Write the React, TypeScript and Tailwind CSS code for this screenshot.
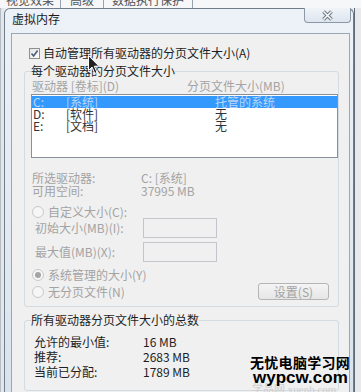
import React from 'react'

const dis = 'text-[#a3a3a3]'

function Radio({ checked }: { checked?: boolean }) {
  return (
    <span className="w-[12px] h-[12px] rounded-full border border-[#c9c9c9] bg-[#f6f6f6] flex items-center justify-center shrink-0">
      {checked && <span className="w-[6px] h-[6px] rounded-full bg-[#a5a5a5]" />}
    </span>
  )
}

function Checkbox() {
  return (
    <span className="w-[11px] h-[11px] border border-[#8f8f8f] bg-linear-to-br from-[#e4e4e4] to-[#ffffff] flex items-center justify-center shrink-0">
      <svg width="9" height="9" viewBox="0 0 9 9">
        <path d="M1.5 4.5 L3.6 7 L7.6 1.5" fill="none" stroke="#4b5d78" strokeWidth="1.6" />
      </svg>
    </span>
  )
}

const drives = [
  { letter: 'C:', label: '[系统]', size: '托管的系统', selected: true },
  { letter: 'D:', label: '[软件]', size: '无' },
  { letter: 'E:', label: '[文档]', size: '无' },
]

export default function App() {
  return (
    <div className="w-[361px] h-[392px] overflow-hidden relative bg-[#eceef1] text-[12px] leading-[14px] text-[#1e1e1e] font-['Noto_Sans_CJK_SC','Liberation_Sans',sans-serif]">
      {/* tabs of the parent dialog, mostly hidden */}
      <div className="h-[8px] overflow-hidden bg-[#f6f7f9]">
        <div className="flex -mt-[9px] h-[17px] leading-[17px] text-[#555]">
          <span className="px-[6px] border-r border-[#9aa4ae]">视觉效果</span>
          <span className="px-[9px] border-r border-[#9aa4ae]">高级</span>
          <span className="px-[8px] border-r border-[#9aa4ae]">数据执行保护</span>
        </div>
      </div>

      <div className="flex h-[384px]">
        <div className="w-[4px] bg-[#e4e6e9] border-l border-[#b5bcc4]" />

        {/* dialog window */}
        <div className="w-[350px] h-[400px] border border-b-0 border-[#6f7d8d] rounded-t-[6px] bg-linear-to-b from-[#edf2f8] to-[#d9e2eb] flex flex-col">
          <div className="h-[24px] flex items-start justify-between">
            <span className="pl-[7px] pt-[3px] text-[12px] leading-[14px] text-[#1a1a1a]">虚拟内存</span>
            <div className="w-[47px] h-[15px] mr-[2px] -mt-[1px] border border-t-0 border-[#8c98a6] rounded-b-[4px] bg-linear-to-b from-[#f0f4f8] to-[#dde5ee] flex items-center justify-center">
              <svg width="13" height="11" viewBox="0 0 13 11">
                <path d="M2.5 1.5 L10.5 9.5 M10.5 1.5 L2.5 9.5" stroke="#6c7784" strokeWidth="3.6" />
                <path d="M2.5 1.5 L10.5 9.5 M10.5 1.5 L2.5 9.5" stroke="#f8f9fb" strokeWidth="1.6" />
              </svg>
            </div>
          </div>

          {/* client area */}
          <div className="ml-[6px] w-[339px] flex-1 border border-[#9ba7b4] bg-[#f0f0f0]">
            <div className="mt-[12px] h-[14px] pl-[17px] flex items-center gap-[3px]">
              <Checkbox />
              <span>自动管理所有驱动器的分页文件大小(A)</span>
            </div>

            <fieldset className="mt-[4px] ml-[12px] w-[315px] border border-[#d3dbe2] rounded-[3px] pb-[6px]">
              <legend className="ml-[6px] h-[14px] leading-[14px]">每个驱动器的分页文件大小</legend>

              <div className={`mt-[2px] h-[12px] leading-[12px] flex pl-[7px] ${dis}`}>
                <span className="w-[155px]">驱动器 [卷标](D)</span>
                <span>分页文件大小(MB)</span>
              </div>

              <div className="mt-[2px] ml-[6px] w-[307px] h-[64px] border border-[#8a9099] bg-white pt-[1px]">
                {drives.map((d) => (
                  <div
                    key={d.letter}
                    className={`h-[12px] leading-[12px] flex ${d.selected ? 'bg-[#3399ff] text-[#b9d6f5]' : 'text-[#333]'}`}
                  >
                    <span className="w-[34px] pl-[1px]">{d.letter}</span>
                    <span className="w-[149px]">{d.label}</span>
                    <span>{d.size}</span>
                  </div>
                ))}
              </div>

              <div className={`mt-[14px] h-[12px] leading-[12px] flex pl-[7px] ${dis}`}>
                <span className="w-[109px]">所选驱动器:</span>
                <span>C: [系统]</span>
              </div>
              <div className={`mt-[1px] h-[12px] leading-[12px] flex pl-[7px] ${dis}`}>
                <span className="w-[109px]">可用空间:</span>
                <span>37995 MB</span>
              </div>

              <div className={`mt-[9px] h-[12px] leading-[12px] flex items-center gap-[4px] pl-[7px] ${dis}`}>
                <Radio />
                <span>自定义大小(C):</span>
              </div>
              <div className={`h-[20px] flex items-center pl-[10px] ${dis}`}>
                <span className="w-[108px]">初始大小(MB)(I):</span>
                <span className="w-[74px] h-[20px] border border-[#c2c6cb] bg-[#f0f0f0]" />
              </div>
              <div className={`mt-[4px] h-[20px] flex items-center pl-[10px] ${dis}`}>
                <span className="w-[108px]">最大值(MB)(X):</span>
                <span className="w-[74px] h-[20px] border border-[#c2c6cb] bg-[#f0f0f0]" />
              </div>

              <div className={`mt-[7px] h-[12px] leading-[12px] flex items-center gap-[4px] pl-[7px] ${dis}`}>
                <Radio checked />
                <span>系统管理的大小(Y)</span>
              </div>
              <div className={`mt-[2px] h-[17px] flex items-center gap-[4px] pl-[7px] ${dis}`}>
                <Radio />
                <span>无分页文件(N)</span>
                <span className="ml-auto mr-[9px] w-[71px] h-[17px] leading-[15px] text-center border border-[#b5b5b5] rounded-[3px] bg-linear-to-b from-[#f4f4f4] to-[#e6e6e6]">
                  设置(S)
                </span>
              </div>
            </fieldset>

            <fieldset className="mt-[6px] ml-[12px] w-[315px] border border-[#d3dbe2] rounded-[3px] pb-[11px]">
              <legend className="ml-[6px] h-[14px] leading-[14px]">所有驱动器分页文件大小的总数</legend>
              {[
                ['允许的最小值:', '16 MB'],
                ['推荐:', '2683 MB'],
                ['当前已分配:', '1789 MB'],
              ].map(([k, v], i) => (
                <div key={k} className={`${i === 0 ? 'mt-[7px]' : ''} h-[15px] leading-[15px] flex pl-[9px]`}>
                  <span className="w-[109px]">{k}</span>
                  <span>{v}</span>
                </div>
              ))}
            </fieldset>
          </div>
        </div>

        <div className="flex-1 bg-[#e8e9eb] border-l border-[#5f6b77]" />
      </div>

      {/* mouse pointer */}
      <svg className="absolute left-[88px] top-[55px]" width="13" height="20" viewBox="0 0 13 20">
        <path d="M0.5 0.5 L0.5 15.5 L4 12 L6.8 18.5 L9 17.5 L6.3 11.2 L11 11.2 Z" fill="#222" stroke="#fff" strokeWidth="1" />
      </svg>

      {/* watermark */}
      <div className="absolute left-[252px] top-[384px] text-[11px] leading-[11px] text-[#cfcfcf] font-['Liberation_Serif','Noto_Sans_CJK_SC',serif]">
        学品网 xuenb.com
      </div>
      <div className="absolute left-[250px] top-[354px] text-[14px] leading-[17px] font-bold tracking-[0.3px] text-black">
        无忧电脑学习网
      </div>
      <div className="absolute left-[253px] top-[368px] text-[17px] leading-[20px] font-bold text-black font-['Liberation_Sans',sans-serif]">
        wypcw.com
      </div>
    </div>
  )
}
